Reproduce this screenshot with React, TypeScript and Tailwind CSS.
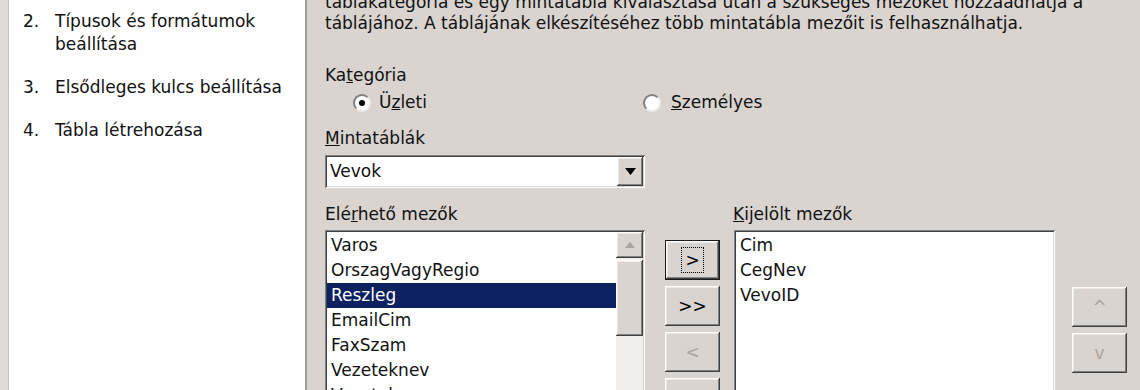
import React from "react";

const raised =
  "shadow-[inset_-1px_-1px_0_#404040,inset_1px_1px_0_#ffffff,inset_-2px_-2px_0_#808080,inset_2px_2px_0_#ece9e6]";
const sunken =
  "shadow-[inset_1px_1px_0_#808080,inset_-1px_-1px_0_#ffffff,inset_2px_2px_0_#404040,inset_-2px_-2px_0_#d9d4d0]";

const Radio = ({ checked }: { checked?: boolean }) => (
  <span className="relative inline-flex w-[18px] h-[18px] rounded-full bg-white border-2 border-t-[#808080] border-l-[#808080] border-b-[#f0eeec] border-r-[#f0eeec] items-center justify-center">
    {checked && <span className="w-[6px] h-[6px] rounded-full bg-black" />}
  </span>
);

const ListBox = ({
  items,
  selected,
  scroll,
  className,
}: {
  items: string[];
  selected?: number;
  scroll?: boolean;
  className?: string;
}) => (
  <div className={`bg-white ${sunken} p-[2px] flex h-[180px] ${className ?? ""}`}>
    <div className="flex-1 flex flex-col pt-[1px]">
      {items.map((it, i) => (
        <div
          key={it}
          className={`h-[25px] leading-[25px] pl-[4px] ${
            i === selected ? "bg-[#0c215f] text-white" : ""
          }`}
        >
          {it}
        </div>
      ))}
    </div>
    {scroll && (
      <div className="w-[27px] flex flex-col bg-[#f1efec]">
        <div className={`h-[26px] bg-[#d9d4d0] ${raised} flex items-center justify-center`}>
          <svg width="10" height="6" viewBox="0 0 10 6">
            <path d="M5 0 L10 6 L0 6 Z" fill="#a8a4a0" />
          </svg>
        </div>
        <div className={`h-[76px] mt-[2px] bg-[#d9d4d0] ${raised}`} />
      </div>
    )}
  </div>
);

const Btn = ({
  children,
  def,
  disabled,
}: {
  children: React.ReactNode;
  def?: boolean;
  disabled?: boolean;
}) => (
  <div
    className={`w-[55px] h-[40px] flex items-center justify-center bg-[#d9d4d0] ${
      def ? "border border-[#1a1a1a]" : ""
    } ${raised} ${disabled ? "text-[#a8a4a0]" : "text-black"}`}
  >
    {children}
  </div>
);

export default function App() {
  return (
    <div className="w-[1140px] h-[390px] overflow-hidden flex bg-[#d9d4d0] text-[#111] text-[17px] font-['DejaVu_Sans','Liberation_Sans',sans-serif]">
      {/* steps panel */}
      <div className="w-[9px] bg-[#dedad6] border-r border-[#c4c0bc]" />
      <div className="w-[298px] bg-white border-r-2 border-[#a29e9a] pt-[10px] leading-[23px]">
        <div className="flex flex-col gap-[20px]">
          {[
            ["2.", "Típusok és formátumok beállítása"],
            ["3.", "Elsődleges kulcs beállítása"],
            ["4.", "Tábla létrehozása"],
          ].map(([n, t]) => (
            <div key={n} className="flex">
              <div className="w-[46px] pl-[14px]">{n}</div>
              <div className="w-[236px]">{t}</div>
            </div>
          ))}
        </div>
      </div>

      {/* main form */}
      <div className="flex-1 pl-[18px] leading-[21px]">
        <div className="-mt-[8px] whitespace-nowrap">
          táblakategória és egy mintatábla kiválasztása után a szükséges mezőket hozzáadhatja a
          <br />
          táblájához. A táblájának elkészítéséhez több mintatábla mezőit is felhasználhatja.
        </div>

        <div className="mt-[31px]">
          Ka<span className="underline">t</span>egória
        </div>
        <div className="mt-[6px] flex items-center h-[21px]">
          <div className="flex items-center gap-[8px] pl-[28px] w-[318px]">
            <Radio checked />
            <span>
              Ü<span className="underline">z</span>leti
            </span>
          </div>
          <div className="flex items-center gap-[10px]">
            <Radio />
            <span>
              <span className="underline">S</span>zemélyes
            </span>
          </div>
        </div>

        <div className="mt-[15px]">
          <span className="underline">M</span>intatáblák
        </div>
        <div className={`mt-[6px] w-[320px] h-[33px] bg-white ${sunken} p-[2px] flex`}>
          <div className="flex-1 pl-[3px] leading-[29px]">Vevok</div>
          <div className={`w-[26px] bg-[#d9d4d0] ${raised} flex items-center justify-center`}>
            <svg width="11" height="7" viewBox="0 0 11 7">
              <path d="M0 0 L11 0 L5.5 7 Z" fill="#000" />
            </svg>
          </div>
        </div>

        <div className="mt-[16px] flex">
          <div className="w-[408px]">
            Elé<span className="underline">r</span>hető mezők
          </div>
          <div>
            <span className="underline">K</span>ijelölt mezők
          </div>
        </div>

        <div className="mt-[5px] flex">
          <ListBox
            className="w-[320px]"
            scroll
            selected={2}
            items={["Varos", "OrszagVagyRegio", "Reszleg", "EmailCim", "FaxSzam", "Vezeteknev", "Vezetek"]}
          />
          <div className="ml-[20px] pt-[10px] flex flex-col gap-[6px]">
            <Btn def>
              <span className="border border-dotted border-black px-[3px] leading-[24px]">&gt;</span>
            </Btn>
            <Btn>&gt;&gt;</Btn>
            <Btn disabled>&lt;</Btn>
            <Btn disabled>&lt;&lt;</Btn>
          </div>
          <ListBox className="ml-[14px] w-[321px]" items={["Cim", "CegNev", "VevoID"]} />
          <div className="ml-[17px] pt-[57px] flex flex-col gap-[6px]">
            <Btn disabled>^</Btn>
            <Btn disabled>v</Btn>
          </div>
        </div>
      </div>
    </div>
  );
}
